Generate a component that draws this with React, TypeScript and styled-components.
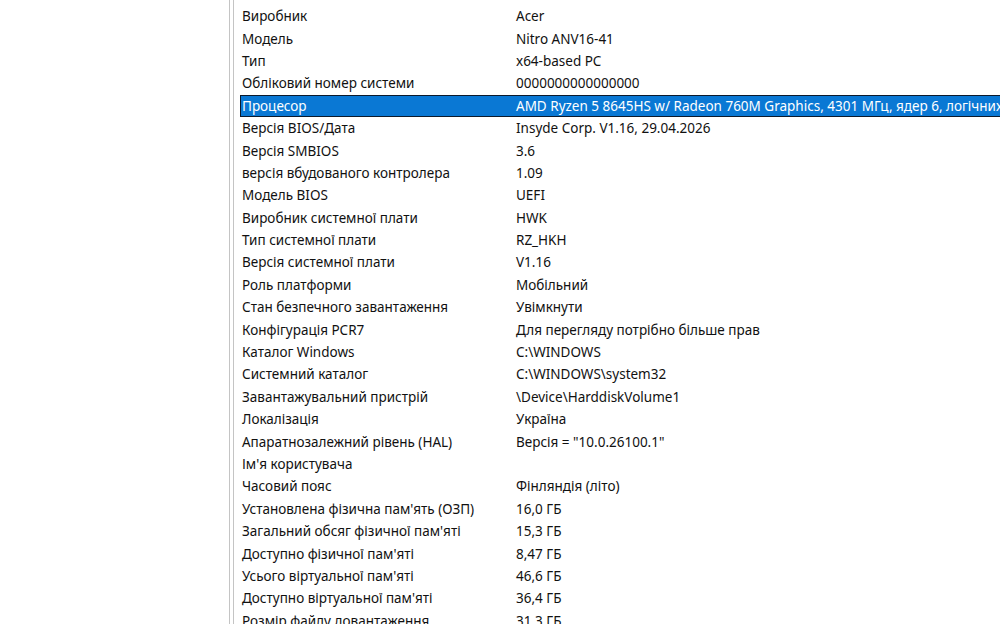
import styled, { createGlobalStyle } from 'styled-components';

const GlobalStyle = createGlobalStyle`
  html, body {
    margin: 0;
    padding: 0;
    background: #fff;
    overflow: hidden;
  }
  body {
    font-family: 'Noto Sans', 'Open Sans', sans-serif;
  }
`;

type SummaryItem = {
  label: string;
  value: string;
};

const items: SummaryItem[] = [
  { label: 'Виробник', value: 'Acer' },
  { label: 'Модель', value: 'Nitro ANV16-41' },
  { label: 'Тип', value: 'x64-based PC' },
  { label: 'Обліковий номер системи', value: '0000000000000000' },
  {
    label: 'Процесор',
    value: 'AMD Ryzen 5 8645HS w/ Radeon 760M Graphics, 4301 МГц, ядер 6, логічних процесорів 12',
  },
  { label: 'Версія BIOS/Дата', value: 'Insyde Corp. V1.16, 29.04.2026' },
  { label: 'Версія SMBIOS', value: '3.6' },
  { label: 'версія вбудованого контролера', value: '1.09' },
  { label: 'Модель BIOS', value: 'UEFI' },
  { label: 'Виробник системної плати', value: 'HWK' },
  { label: 'Тип системної плати', value: 'RZ_HKH' },
  { label: 'Версія системної плати', value: 'V1.16' },
  { label: 'Роль платформи', value: 'Мобільний' },
  { label: 'Стан безпечного завантаження', value: 'Увімкнути' },
  { label: 'Конфігурація PCR7', value: 'Для перегляду потрібно більше прав' },
  { label: 'Каталог Windows', value: 'C:\\WINDOWS' },
  { label: 'Системний каталог', value: 'C:\\WINDOWS\\system32' },
  { label: 'Завантажувальний пристрій', value: '\\Device\\HarddiskVolume1' },
  { label: 'Локалізація', value: 'Україна' },
  { label: 'Апаратнозалежний рівень (HAL)', value: 'Версія = "10.0.26100.1"' },
  { label: "Ім'я користувача", value: '' },
  { label: 'Часовий пояс', value: 'Фінляндія (літо)' },
  { label: "Установлена фізична пам'ять (ОЗП)", value: '16,0 ГБ' },
  { label: "Загальний обсяг фізичної пам'яті", value: '15,3 ГБ' },
  { label: "Доступно фізичної пам'яті", value: '8,47 ГБ' },
  { label: "Усього віртуальної пам'яті", value: '46,6 ГБ' },
  { label: "Доступно віртуальної пам'яті", value: '36,4 ГБ' },
  { label: 'Розмір файлу довантаження', value: '31,3 ГБ' },
];

const SELECTED = 4;

const Window = styled.div`
  display: flex;
  width: 1000px;
  height: 624px;
  overflow: hidden;
  background: #fff;
`;

const TreePane = styled.div`
  width: 229px;
  flex-shrink: 0;
`;

const Splitter = styled.div`
  width: 3px;
  flex-shrink: 0;
  border-left: 1px solid #c4c4c4;
  border-right: 1px solid #c4c4c4;
`;

const ListPane = styled.div`
  flex: 1;
  min-width: 0;
  padding: 5px 0 0 6px;
  overflow: hidden;
`;

const Row = styled.div<{ $selected: boolean }>`
  display: grid;
  grid-template-columns: 274px 1fr;
  height: 22.4px;
  box-sizing: border-box;
  align-items: center;
  white-space: nowrap;
  font-size: 13.5px;
  color: ${(p) => (p.$selected ? '#fff' : '#111')};
  background: ${(p) => (p.$selected ? '#0a78d4' : 'transparent')};
  border: 1px solid ${(p) => (p.$selected ? '#0c1a2c' : 'transparent')};
  margin-right: -40px;
`;

const Cell = styled.span`
  padding-left: 1px;
  overflow: hidden;
`;

export default function App() {
  return (
    <>
      <GlobalStyle />
      <Window>
        <TreePane />
        <Splitter />
        <ListPane>
          {items.map((item, i) => (
            <Row key={item.label} $selected={i === SELECTED}>
              <Cell>{item.label}</Cell>
              <Cell>{item.value}</Cell>
            </Row>
          ))}
        </ListPane>
      </Window>
    </>
  );
}
